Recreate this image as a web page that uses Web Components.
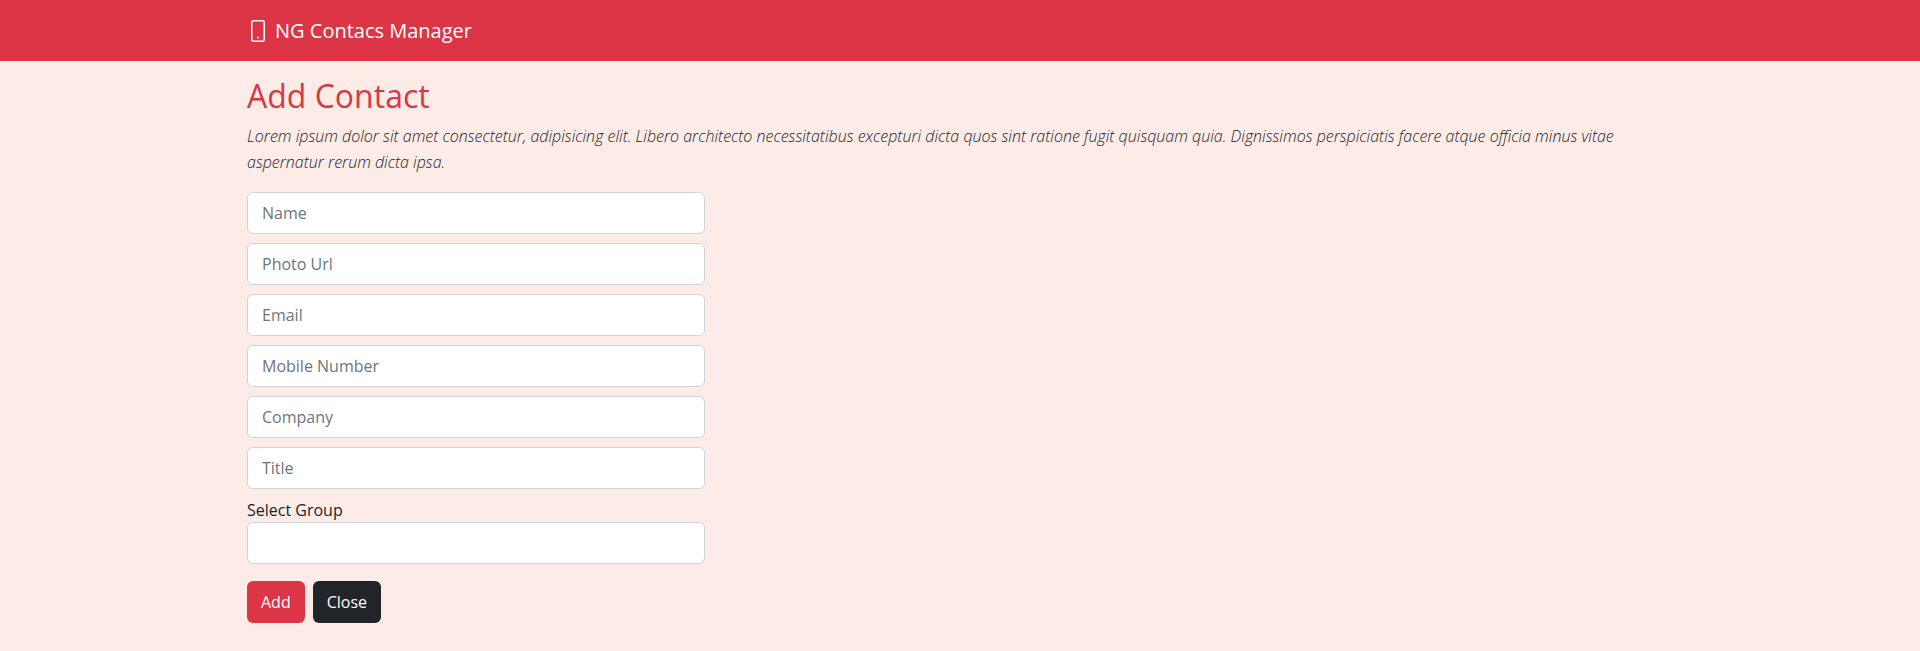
<!DOCTYPE html>
<html lang="en">
<head>
<meta charset="utf-8">
<title>NG Contacs Manager</title>
<style>
  html, body { margin: 0; padding: 0; }
  body { background: #fdebe7; font-family: "Open Sans", "Noto Sans", sans-serif; height: 651px; overflow: hidden; }
</style>
</head>
<body>
<app-navbar>NG Contacs Manager</app-navbar>
<add-contact heading="Add Contact">
  Lorem ipsum dolor sit amet consectetur, adipisicing elit. Libero architecto necessitatibus excepturi dicta quos sint ratione fugit quisquam quia. Dignissimos perspiciatis facere atque officia minus vitae aspernatur rerum dicta ipsa.
</add-contact>
<script>
class AppNavbar extends HTMLElement {
  constructor(){
    super();
    this.attachShadow({ mode: "open" });
    this.shadowRoot.innerHTML = `
      <style>
        :host { display: block; background: #dc3545; color: #fff; height: 61px; }
        .brand {
          display: flex;
          align-items: center;
          gap: 8px;
          height: 61px;
          padding-left: 248px;
          font-size: 20px;
        }
        svg { display: block; width: 19px; height: 22px; }
      </style>
      <div class="brand">
        <svg viewBox="0 0 19 22" fill="none" stroke="currentColor" stroke-width="1.5">
          <rect x="3.75" y="0.75" width="12.5" height="20.5" rx="2"/>
          <circle cx="10" cy="17.5" r="1" fill="currentColor" stroke="none"/>
        </svg>
        <span><slot></slot></span>
      </div>`;
  }
}

class FormField extends HTMLElement {
  constructor(){
    super();
    this.attachShadow({ mode: "open" });
  }
  connectedCallback(){
    const placeholder = this.getAttribute("placeholder") || "";
    this.shadowRoot.innerHTML = `
      <style>
        :host { display: block; }
        input {
          display: block;
          box-sizing: border-box;
          width: 100%;
          height: 42px;
          padding: 0 14px;
          border: 1px solid #ced4da;
          border-radius: 6px;
          background: #fff;
          font: 16px "Open Sans", "Noto Sans", sans-serif;
          color: #212529;
          outline: none;
        }
        input::placeholder { color: #6c757d; opacity: 1; }
      </style>
      <input type="text" placeholder="${placeholder}">`;
  }
}

class FormButton extends HTMLElement {
  constructor(){
    super();
    this.attachShadow({ mode: "open" });
    this.shadowRoot.innerHTML = `
      <style>
        :host { display: inline-block; }
        button {
          display: block;
          height: 42px;
          padding: 0 14px;
          border: none;
          border-radius: 6px;
          font: 16px "Open Sans", "Noto Sans", sans-serif;
          color: #fff;
          background: var(--btn-bg, #dc3545);
          cursor: pointer;
        }
      </style>
      <button type="button"><slot></slot></button>`;
  }
}

class AddContact extends HTMLElement {
  constructor(){
    super();
    this.attachShadow({ mode: "open" });
  }
  connectedCallback(){
    const fields = ["Name", "Photo Url", "Email", "Mobile Number", "Company", "Title"];
    this.shadowRoot.innerHTML = `
      <style>
        :host { display: block; padding: 16px 270px 0 247px; color: #212529; }
        h1 { margin: 0; font-size: 32px; font-weight: 400; line-height: 38px; color: #dc3545; }
        p { margin: 8px 0 0; font-size: 16px; line-height: 26px; font-style: italic; font-weight: 300; }
        form { width: 458px; margin-top: 17px; display: flex; flex-direction: column; }
        .fields { display: flex; flex-direction: column; gap: 9px; }
        label { display: block; margin-top: 9px; line-height: 24px; font-size: 16px; }
        select {
          display: block;
          box-sizing: border-box;
          width: 100%;
          height: 42px;
          border: 1px solid #ced4da;
          border-radius: 6px;
          background: #fff;
          appearance: none;
        }
        .actions { display: flex; gap: 8px; margin-top: 17px; }
        .dark { --btn-bg: #212529; }
      </style>
      <h1>${this.getAttribute("heading")}</h1>
      <p><slot></slot></p>
      <form>
        <div class="fields">
          ${fields.map(f => `<form-field placeholder="${f}"></form-field>`).join("")}
        </div>
        <label>Select Group</label>
        <select></select>
        <div class="actions">
          <form-button>Add</form-button>
          <form-button class="dark">Close</form-button>
        </div>
      </form>`;
  }
}

customElements.define("app-navbar", AppNavbar);
customElements.define("form-field", FormField);
customElements.define("form-button", FormButton);
customElements.define("add-contact", AddContact);
</script>
</body>
</html>
